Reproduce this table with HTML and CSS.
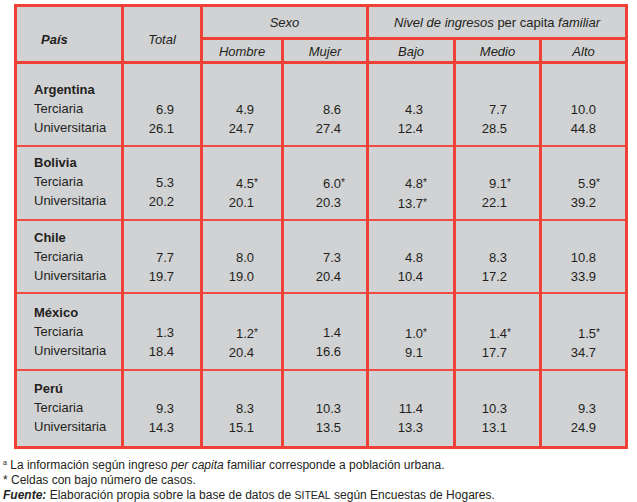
FILE: index.html
```html
<!DOCTYPE html>
<html lang="es">
<head>
<meta charset="utf-8">
<title>Tabla</title>
<link rel="stylesheet" href="styles.css">
</head>
<body>
<div class="wrap">
<table class="tbl">
  <colgroup>
    <col class="c-pais"><col class="c-total"><col class="c-hombre"><col class="c-mujer"><col class="c-bajo"><col class="c-medio"><col class="c-alto">
  </colgroup>
  <thead>
    <tr class="h1">
      <th rowspan="2" class="th-pais">País</th>
      <th rowspan="2" class="th-total">Total</th>
      <th colspan="2" class="th-group thick-r">Sexo</th>
      <th colspan="3" class="th-group"><i>Nivel de ingresos</i> per capita <i>familiar</i></th>
    </tr>
    <tr class="h2">
      <th class="thin-r">Hombre</th>
      <th class="thick-r">Mujer</th>
      <th class="thin-r">Bajo</th>
      <th class="thin-r">Medio</th>
      <th>Alto</th>
    </tr>
  </thead>
  <tbody>
    <tr class="g g-arg">
      <td class="lbl"><div class="country">Argentina</div><div>Terciaria</div><div>Universitaria</div></td>
      <td class="num n-total"><div>&nbsp;</div><div>6.9</div><div>26.1</div></td>
      <td class="num n-hombre thin-r"><div>&nbsp;</div><div>4.9</div><div>24.7</div></td>
      <td class="num n-mujer thick-r"><div>&nbsp;</div><div>8.6</div><div>27.4</div></td>
      <td class="num n-bajo thin-r"><div>&nbsp;</div><div>4.3</div><div>12.4</div></td>
      <td class="num n-medio thin-r"><div>&nbsp;</div><div>7.7</div><div>28.5</div></td>
      <td class="num n-alto"><div>&nbsp;</div><div>10.0</div><div>44.8</div></td>
    </tr>
    <tr class="g g-bol">
      <td class="lbl"><div class="country">Bolivia</div><div>Terciaria</div><div>Universitaria</div></td>
      <td class="num n-total"><div>&nbsp;</div><div>5.3</div><div>20.2</div></td>
      <td class="num n-hombre thin-r"><div>&nbsp;</div><div>4.5<span class="ast">*</span></div><div>20.1</div></td>
      <td class="num n-mujer thick-r"><div>&nbsp;</div><div>6.0<span class="ast">*</span></div><div>20.3</div></td>
      <td class="num n-bajo thin-r"><div>&nbsp;</div><div>4.8<span class="ast">*</span></div><div>13.7<span class="ast">*</span></div></td>
      <td class="num n-medio thin-r"><div>&nbsp;</div><div>9.1<span class="ast">*</span></div><div>22.1</div></td>
      <td class="num n-alto"><div>&nbsp;</div><div>5.9<span class="ast">*</span></div><div>39.2</div></td>
    </tr>
    <tr class="g g-chi">
      <td class="lbl"><div class="country">Chile</div><div>Terciaria</div><div>Universitaria</div></td>
      <td class="num n-total"><div>&nbsp;</div><div>7.7</div><div>19.7</div></td>
      <td class="num n-hombre thin-r"><div>&nbsp;</div><div>8.0</div><div>19.0</div></td>
      <td class="num n-mujer thick-r"><div>&nbsp;</div><div>7.3</div><div>20.4</div></td>
      <td class="num n-bajo thin-r"><div>&nbsp;</div><div>4.8</div><div>10.4</div></td>
      <td class="num n-medio thin-r"><div>&nbsp;</div><div>8.3</div><div>17.2</div></td>
      <td class="num n-alto"><div>&nbsp;</div><div>10.8</div><div>33.9</div></td>
    </tr>
    <tr class="g g-mex">
      <td class="lbl"><div class="country">México</div><div>Terciaria</div><div>Universitaria</div></td>
      <td class="num n-total"><div>&nbsp;</div><div>1.3</div><div>18.4</div></td>
      <td class="num n-hombre thin-r"><div>&nbsp;</div><div>1.2<span class="ast">*</span></div><div>20.4</div></td>
      <td class="num n-mujer thick-r"><div>&nbsp;</div><div>1.4</div><div>16.6</div></td>
      <td class="num n-bajo thin-r"><div>&nbsp;</div><div>1.0<span class="ast">*</span></div><div>9.1</div></td>
      <td class="num n-medio thin-r"><div>&nbsp;</div><div>1.4<span class="ast">*</span></div><div>17.7</div></td>
      <td class="num n-alto"><div>&nbsp;</div><div>1.5<span class="ast">*</span></div><div>34.7</div></td>
    </tr>
    <tr class="g g-per">
      <td class="lbl"><div class="country">Perú</div><div>Terciaria</div><div>Universitaria</div></td>
      <td class="num n-total"><div>&nbsp;</div><div>9.3</div><div>14.3</div></td>
      <td class="num n-hombre thin-r"><div>&nbsp;</div><div>8.3</div><div>15.1</div></td>
      <td class="num n-mujer thick-r"><div>&nbsp;</div><div>10.3</div><div>13.5</div></td>
      <td class="num n-bajo thin-r"><div>&nbsp;</div><div>11.4</div><div>13.3</div></td>
      <td class="num n-medio thin-r"><div>&nbsp;</div><div>10.3</div><div>13.1</div></td>
      <td class="num n-alto"><div>&nbsp;</div><div>9.3</div><div>24.9</div></td>
    </tr>
  </tbody>
</table>
</div>
<div class="notes">
  <p><sup class="sa">a</sup> La información según ingreso <i>per capita</i> familiar corresponde a población urbana.</p>
  <p>* Celdas con bajo número de casos.</p>
  <p><b><i>Fuente:</i></b> Elaboración propia sobre la base de datos de <span class="sc">SITEAL</span> según Encuestas de Hogares.</p>
</div>
</body>
</html>
```
FILE: styles.css
```css
html, body {
  margin: 0;
  padding: 0;
  background: #ffffff;
}
body {
  font-family: "Liberation Sans", Arial, sans-serif;
  color: #231f20;
  padding: 4px 0 0 3px;
}
.wrap {
  padding-left: 11px;
}
.tbl {
  border-collapse: collapse;
  table-layout: fixed;
  width: 613px;
  background: #d1d2d4;
  font-size: 13px;
  border: 3px solid #ef4136;
}
.c-pais { width: 107px; }
.c-total { width: 79px; }
.c-hombre { width: 81px; }
.c-mujer { width: 85px; }
.c-bajo { width: 87px; }
.c-medio { width: 86px; }
.c-alto { width: 86px; }

.tbl th {
  font-weight: normal;
  font-style: italic;
  text-align: center;
  padding: 0;
  border: 3px solid #ef4136;
}
.tbl .h1 { height: 33px; }
.tbl .h2 { height: 24px; }
.tbl .th-pais {
  font-weight: bold;
  text-align: left;
  padding: 11px 0 0 24px;
}
.tbl .th-total {
  padding-top: 11px;
}
.tbl .th-group {
  padding-top: 1px;
  font-style: normal;
}
.tbl .th-group i { font-style: italic; }
.tbl .th-group.thick-r { font-style: italic; }
.tbl .h2 th { padding-top: 2px; }
.tbl th.thin-r { border-right: 1px solid #ef4d42; }

.tbl td {
  vertical-align: top;
  padding: 0;
  line-height: 19px;
  border-top: 2px solid #ef4d42;
  border-left: 3px solid #ef4136;
  border-right: 3px solid #ef4136;
}
.tbl td.thin-r { border-right: 1px solid #ef4d42; }
.tbl td.lbl { padding-left: 17px; }
.tbl .country { font-weight: bold; }
.tbl td.num { text-align: right; }
.tbl td.num div { padding-top: 1px; margin-bottom: -1px; }

.n-total { padding-right: 26px !important; }
.n-hombre { padding-right: 27px !important; }
.n-mujer { padding-right: 25px !important; }
.n-bajo { padding-right: 30px !important; }
.n-medio { padding-right: 32px !important; }
.n-alto { padding-right: 29px !important; }

.ast {
  display: inline-block;
  width: 0;
  font-size: 10px;
  vertical-align: 2px;
  text-align: left;
}

.g-arg td { padding-top: 16px; padding-bottom: 8px; }
.g-bol td { padding-top: 6px; padding-bottom: 7px; }
.g-chi td { padding-top: 7px; padding-bottom: 7px; }
.g-mex td { padding-top: 9px; padding-bottom: 8px; }
.g-per td { padding-top: 8px; padding-bottom: 10px; }

.notes {
  margin-top: 9px;
  font-size: 12px;
  line-height: 15px;
}
.notes p { margin: 0; }
.notes .sa {
  font-size: 7px;
  vertical-align: 4px;
  line-height: 0;
}
.notes .sc { font-size: 10.5px; }
```
